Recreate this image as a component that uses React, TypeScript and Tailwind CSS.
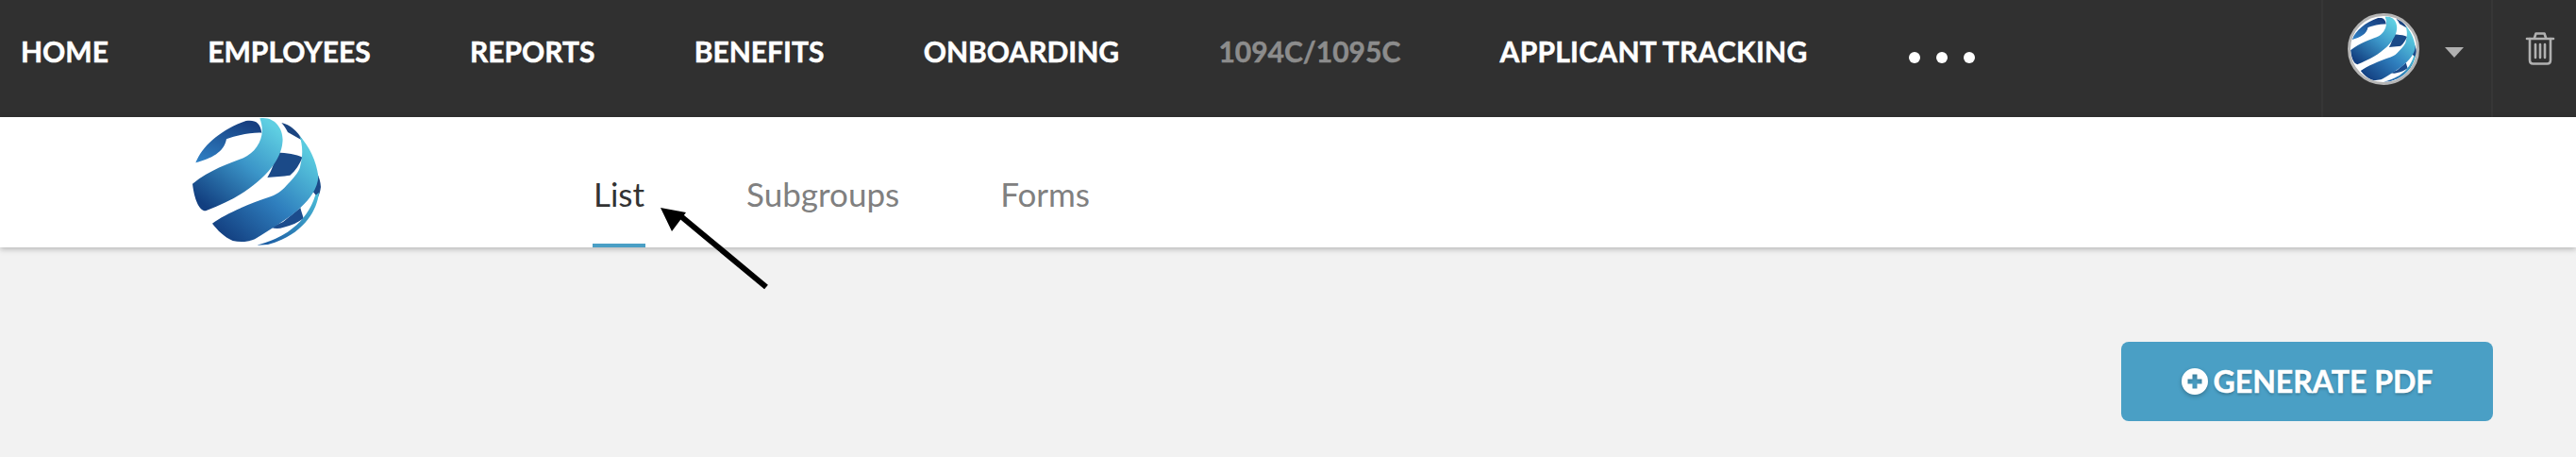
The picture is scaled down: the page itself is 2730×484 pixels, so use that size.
import React from "react";

function Globe({ id, className }: { id: string; className?: string }) {
  return (
    <svg viewBox="0 0 408 408" className={className}>
      <defs>
        <linearGradient id={id + "a"} x1="0.85" y1="0.05" x2="0.15" y2="0.95">
          <stop offset="0" stopColor="#5fcfe2" />
          <stop offset="0.45" stopColor="#3b95c8" />
          <stop offset="1" stopColor="#123f80" />
        </linearGradient>
        <linearGradient id={id + "b"} x1="0.85" y1="0.1" x2="0.1" y2="0.95">
          <stop offset="0" stopColor="#5acbdf" />
          <stop offset="0.5" stopColor="#2f7fbe" />
          <stop offset="1" stopColor="#133f80" />
        </linearGradient>
        <linearGradient id={id + "c"} x1="0.7" y1="0" x2="0.1" y2="1">
          <stop offset="0" stopColor="#173f80" />
          <stop offset="1" stopColor="#2f80c4" />
        </linearGradient>
        <linearGradient id={id + "d"} x1="1" y1="0" x2="0.2" y2="1">
          <stop offset="0" stopColor="#4cbfd9" />
          <stop offset="1" stopColor="#1d5fa5" />
        </linearGradient>
      </defs>
      <path d="M10 145C32 90 90 40 170 12C198 8 216 16 220 50C190 48 140 58 108 70C100 112 60 132 10 145Z" fill={`url(#${id}c)`} />
      <path d="M283 18C310 24 332 42 352 76L303 48C298 38 292 28 283 18Z" fill="#1b4480" />
      <path d="M268 112C300 115 330 118 350 128C340 150 328 170 310 185C290 188 260 190 238 192C252 170 262 140 268 112Z" fill="#1b4a88" />
      <path d="M396 178C403 192 407 205 408 222C406 238 402 248 398 256C390 245 382 235 376 228Z" fill="#1b4a88" />
      <path d="M343 288C346 300 350 310 353 322C335 335 315 345 290 350C275 355 262 355 250 350L288 333Z" fill="#1c4c8c" />
      <path d="M402 240C396 300 350 375 240 405L205 407C250 395 290 378 320 352C350 330 378 290 390 250Z" fill={`url(#${id}d)`} />
      <path d="M214 4C262 -4 292 40 286 82C280 150 200 240 42 298C20 296 6 260 0 212C60 165 122 145 162 130C206 110 236 60 214 4Z" fill={`url(#${id}a)`} />
      <path d="M340 60C370 90 395 140 400 190C398 225 375 260 343 288C310 320 250 355 198 388C175 398 150 398 128 393C100 380 80 360 63 338C100 310 180 275 248 253C275 243 290 228 303 213C325 190 342 170 343 153C352 120 350 85 340 60Z" fill={`url(#${id}b)`} />
    </svg>
  );
}

const items = ["HOME", "EMPLOYEES", "REPORTS", "BENEFITS", "ONBOARDING"];

export default function App() {
  return (
    <div className="relative h-[484px] w-[2730px] overflow-hidden bg-[#f2f2f2] font-['Lato',sans-serif]">
      <nav className="flex h-[124px] bg-[#303030]">
        <div className="flex flex-1 items-start gap-[105.3px] pl-[22px] pt-[34px] text-[30px] leading-[40px] font-bold text-white [-webkit-text-stroke:0.5px]">
          {items.map((t) => (
            <span key={t}>{t}</span>
          ))}
          <span className="text-[#8c8c8c]">1094C/1095C</span>
          <span className="tracking-[0.25px]">APPLICANT TRACKING</span>
          <div className="flex gap-[17px] pl-[2px] pt-[21px]">
            <span className="h-3 w-3 rounded-full bg-white" />
            <span className="h-3 w-3 rounded-full bg-white" />
            <span className="h-3 w-3 rounded-full bg-white" />
          </div>
        </div>
        <div className="flex h-full w-[182px] items-start border-x-2 border-[#363636] pl-[26px] pt-[14px]">
          <div className="h-[76px] w-[76px] overflow-hidden rounded-full border-[3px] border-[#b5b5b5] bg-white">
            <Globe id="av" className="h-full w-full" />
          </div>
          <span className="ml-[27px] mt-[36px] h-0 w-0 border-x-[10px] border-t-[11px] border-x-transparent border-t-[#b0b0b0]" />
        </div>
        <div className="flex w-[88px] justify-start pl-[34px] pt-[33px]">
          <svg width="32" height="36" viewBox="0 0 32 36" fill="none" stroke="#b0b0b0" strokeWidth="2.6" strokeLinecap="round" strokeLinejoin="round">
            <path d="M2 8H30" />
            <path d="M10 7L11.5 2.5H20.5L22 7" />
            <path d="M5 8V30.5C5 33 6.5 34.5 8.5 34.5H23.5C25.5 34.5 27 33 27 30.5V8" />
            <path d="M11 14V28M16 14V28M21 14V28" />
          </svg>
        </div>
      </nav>
      <div className="relative flex h-[138px] items-start bg-white shadow-[0_2px_6px_rgba(0,0,0,0.25)]">
        <Globe id="lg" className="ml-[204px] h-[136px] w-[136px]" />
        <div className="ml-[288px] flex h-full gap-[107px] text-[35px] text-[#808080]">
          <div className="h-full border-b-4 border-[#4a9fc5] px-[1px] pt-[59px] leading-[44px] text-[#333333]">List</div>
          <div className="pt-[59px] leading-[44px]">Subgroups</div>
          <div className="pt-[59px] leading-[44px]">Forms</div>
        </div>
      </div>
      <div className="flex justify-end pr-[88px] pt-[100px]">
        <button className="flex h-[84px] w-[394px] items-center justify-center gap-[6px] rounded-[8px] bg-[#4a9fc5] text-[32px] font-bold text-white [-webkit-text-stroke:0.5px] [text-shadow:0_2px_3px_rgba(0,0,0,0.25)]">
          <svg width="28" height="28" viewBox="0 0 28 28" className="drop-shadow-[0_2px_2px_rgba(0,0,0,0.25)]">
            <path fillRule="evenodd" fill="#fff" d="M14 0A14 14 0 1 1 14 28A14 14 0 1 1 14 0ZM11.5 6.5V11.5H6.5V16.5H11.5V21.5H16.5V16.5H21.5V11.5H16.5V6.5Z" />
          </svg>
          GENERATE PDF
        </button>
      </div>
      <svg className="absolute left-0 top-0" width="2730" height="484" fill="none">
        <path d="M812 304L718 226" stroke="#000" strokeWidth="6" />
        <path d="M700 220L727 225L712 245Z" fill="#000" />
      </svg>
    </div>
  );
}
